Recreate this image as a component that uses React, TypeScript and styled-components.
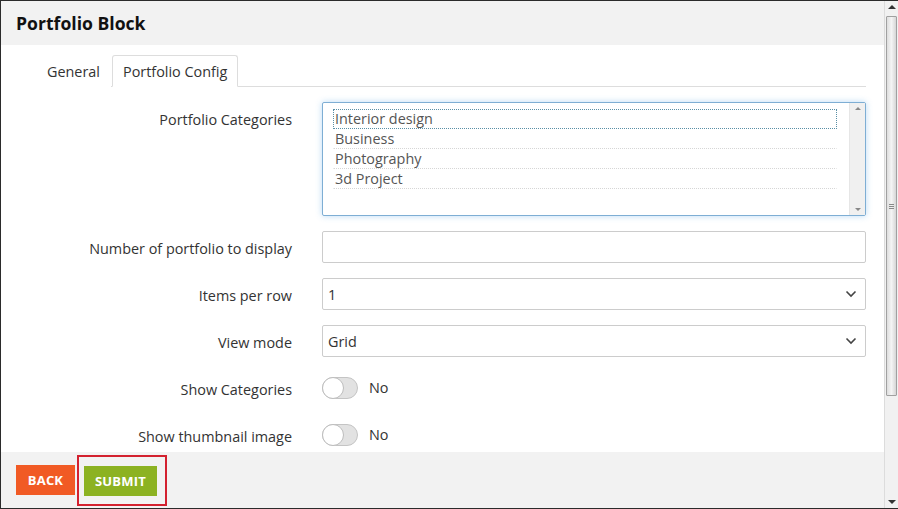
import React from "react";
import styled, { createGlobalStyle } from "styled-components";

const GlobalStyle = createGlobalStyle`
  html, body {
    margin: 0;
    padding: 0;
    background: #fff;
  }
  body {
    font-family: "Open Sans", "Liberation Sans", Arial, sans-serif;
    color: #333;
  }
  * { box-sizing: border-box; }
`;

const categories = ["Interior design", "Business", "Photography", "3d Project"];

const Frame = styled.div`
  width: 898px;
  height: 509px;
  display: flex;
  border-top: 1px solid #2b2b2b;
  border-left: 1px solid #2b2b2b;
  border-bottom: 1px solid #2b2b2b;
  overflow: hidden;
`;

const Main = styled.div`
  flex: 1;
  display: flex;
  flex-direction: column;
  min-width: 0;
`;

const Header = styled.div`
  height: 44px;
  background: #f2f2f2;
  display: flex;
  align-items: center;
  padding-left: 15px;
  flex-shrink: 0;
`;

const Title = styled.h1`
  margin: 0;
  font-size: 17.6px;
  font-weight: 700;
  color: #111;
`;

const Body = styled.div`
  flex: 1;
  background: #fff;
  padding: 10px 18px 0 35px;
`;

const Tabs = styled.div`
  display: flex;
  height: 32px;
  border-bottom: 1px solid #ddd;
`;

const Tab = styled.div<{ $active?: boolean }>`
  padding: 0 10px;
  height: 32px;
  display: flex;
  align-items: center;
  font-size: 14.4px;
  color: #333;
  border: 1px solid ${(p) => (p.$active ? "#ddd" : "transparent")};
  border-bottom-color: ${(p) => (p.$active ? "#fff" : "transparent")};
  border-radius: 3px 3px 0 0;
  background: #fff;
  margin-right: 1px;
  margin-bottom: -1px;
`;

const Form = styled.div`
  padding-top: 15px;
  display: flex;
  flex-direction: column;
  gap: 15px;
`;

const Row = styled.div`
  display: flex;
  align-items: flex-start;
`;

const Label = styled.div`
  width: 256px;
  flex-shrink: 0;
  text-align: right;
  font-size: 14.4px;
  line-height: 20px;
  padding-top: 8px;
  color: #333;
  margin-right: 30px;
`;

const Field = styled.div`
  flex: 1;
  display: flex;
  align-items: center;
  min-height: 32px;
`;

const ListBox = styled.div`
  flex: 1;
  height: 114px;
  border: 1px solid #7eaed4;
  border-radius: 2px;
  box-shadow: 0 0 6px rgba(102, 175, 233, 0.45);
  display: flex;
  background: #fff;
`;

const ListItems = styled.div`
  flex: 1;
  padding: 6px 12px 0 10px;
`;

const ListItem = styled.div<{ $focused?: boolean }>`
  height: 20px;
  line-height: 18px;
  font-size: 14.4px;
  color: #555;
  padding-left: 1px;
  border: 1px dotted ${(p) => (p.$focused ? "#5a8fa6" : "transparent")};
  border-bottom: 1px dotted ${(p) => (p.$focused ? "#5a8fa6" : "#d6d6d6")};
`;

const InnerScroll = styled.div`
  width: 16px;
  background: #f0f0f0;
  border-left: 1px solid #e6e6e6;
  display: flex;
  flex-direction: column;
  justify-content: space-between;
  align-items: center;
  padding: 4px 0;
`;

const Arrow = styled.div<{ $down?: boolean }>`
  width: 0;
  height: 0;
  border-left: 3px solid transparent;
  border-right: 3px solid transparent;
  ${(p) =>
    p.$down ? "border-top: 3px solid #888;" : "border-bottom: 3px solid #888;"}
`;

const TextInput = styled.div`
  flex: 1;
  height: 32px;
  border: 1px solid #ccc;
  border-radius: 2px;
  background: #fff;
`;

const Select = styled.div`
  flex: 1;
  height: 32px;
  border: 1px solid #ccc;
  border-radius: 2px;
  background: #fff;
  display: flex;
  align-items: center;
  justify-content: space-between;
  padding: 0 8px 0 5px;
  font-size: 14.4px;
  color: #333;
`;

const Toggle = styled.div`
  width: 36px;
  height: 22px;
  border-radius: 11px;
  background: #e2e2e2;
  border: 1px solid #c4c4c4;
  position: relative;
`;

const Knob = styled.div`
  position: absolute;
  left: -1px;
  top: -1px;
  width: 22px;
  height: 22px;
  border-radius: 50%;
  background: #fff;
  border: 1px solid #bdbdbd;
`;

const ToggleText = styled.span`
  margin-left: 11px;
  font-size: 14.4px;
  color: #333;
  margin-top: -2px;
`;

const Footer = styled.div`
  height: 56px;
  background: #f2f2f2;
  display: flex;
  align-items: center;
  padding-left: 15px;
  flex-shrink: 0;
`;

const Button = styled.button<{ $color: string; $width: number }>`
  width: ${(p) => p.$width}px;
  height: 30px;
  border: none;
  border-radius: 0;
  background: ${(p) => p.$color};
  color: #fff;
  font-family: "Open Sans", "Liberation Sans", Arial, sans-serif;
  font-weight: 700;
  font-size: 13px;
  padding: 0;
  letter-spacing: 0.2px;
  cursor: pointer;
`;

const Highlight = styled.div`
  margin-left: 2px;
  border: 2px solid #d3212f;
  padding: 9px 8px 8px 5px;
  display: flex;
`;

const Scrollbar = styled.div`
  width: 14px;
  flex-shrink: 0;
  background: #f1f1f1;
  border-left: 1px solid #dcdcdc;
  display: flex;
  flex-direction: column;
  align-items: center;
  padding: 4px 0;
`;

const ScrollArrow = styled.div<{ $down?: boolean }>`
  width: 0;
  height: 0;
  border-left: 4px solid transparent;
  border-right: 4px solid transparent;
  ${(p) =>
    p.$down
      ? "border-top: 4px solid #333; margin-top: auto;"
      : "border-bottom: 4px solid #333;"}
`;

const Thumb = styled.div`
  margin-top: 7px;
  width: 11px;
  height: 380px;
  border: 1px solid #a0a0a0;
  border-radius: 1px;
  background: linear-gradient(to right, #dedede, #f4f4f4 50%, #d6d6d6);
  display: flex;
  align-items: center;
  justify-content: center;
`;

const Grip = styled.div`
  width: 5px;
  height: 5px;
  border-top: 1px solid #888;
  border-bottom: 1px solid #888;
  position: relative;
  &::after {
    content: "";
    position: absolute;
    left: 0;
    right: 0;
    top: 1px;
    border-top: 1px solid #888;
  }
`;

const Chevron = () => (
  <svg width="12" height="8" viewBox="0 0 12 8">
    <path d="M1.5 1.5 L6 6 L10.5 1.5" fill="none" stroke="#444" strokeWidth="1.6" />
  </svg>
);

const SwitchField = ({ label }: { label: string }) => (
  <Row>
    <Label>{label}</Label>
    <Field>
      <Toggle>
        <Knob />
      </Toggle>
      <ToggleText>No</ToggleText>
    </Field>
  </Row>
);

const App: React.FC = () => {
  return (
    <>
      <GlobalStyle />
      <Frame>
        <Main>
          <Header>
            <Title>Portfolio Block</Title>
          </Header>
          <Body>
            <Tabs>
              <Tab>General</Tab>
              <Tab $active>Portfolio Config</Tab>
            </Tabs>
            <Form>
              <Row>
                <Label>Portfolio Categories</Label>
                <ListBox>
                  <ListItems>
                    {categories.map((c, i) => (
                      <ListItem key={c} $focused={i === 0}>
                        {c}
                      </ListItem>
                    ))}
                  </ListItems>
                  <InnerScroll>
                    <Arrow />
                    <Arrow $down />
                  </InnerScroll>
                </ListBox>
              </Row>
              <Row>
                <Label>Number of portfolio to display</Label>
                <Field>
                  <TextInput />
                </Field>
              </Row>
              <Row>
                <Label>Items per row</Label>
                <Field>
                  <Select>
                    <span>1</span>
                    <Chevron />
                  </Select>
                </Field>
              </Row>
              <Row>
                <Label>View mode</Label>
                <Field>
                  <Select>
                    <span>Grid</span>
                    <Chevron />
                  </Select>
                </Field>
              </Row>
              <SwitchField label="Show Categories" />
              <SwitchField label="Show thumbnail image" />
            </Form>
          </Body>
          <Footer>
            <Button $color="#f15a24" $width={59}>BACK</Button>
            <Highlight>
              <Button $color="#8cb222" $width={73}>SUBMIT</Button>
            </Highlight>
          </Footer>
        </Main>
        <Scrollbar>
          <ScrollArrow />
          <Thumb>
            <Grip />
          </Thumb>
          <ScrollArrow $down />
        </Scrollbar>
      </Frame>
    </>
  );
};

export default App;
